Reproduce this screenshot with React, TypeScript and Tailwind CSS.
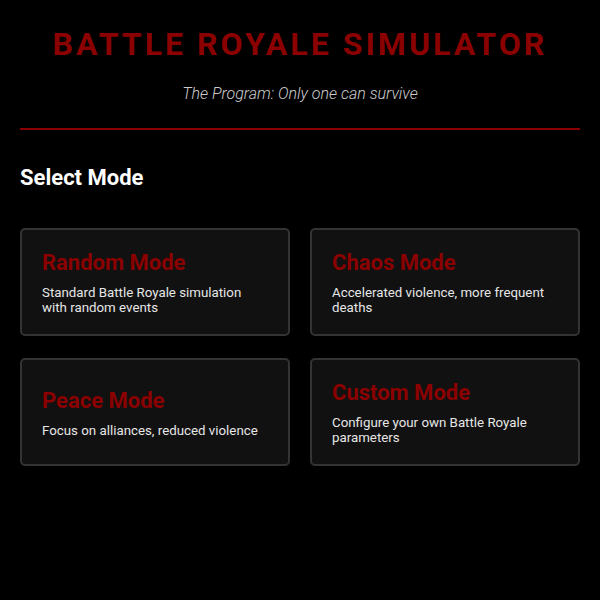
import React from "react";

type Mode = {
  id: string;
  name: string;
  description: string;
};

const modes: Mode[] = [
  { id: "random", name: "Random Mode", description: "Standard Battle Royale simulation with random events" },
  { id: "chaos", name: "Chaos Mode", description: "Accelerated violence, more frequent deaths" },
  { id: "peace", name: "Peace Mode", description: "Focus on alliances, reduced violence" },
  { id: "custom", name: "Custom Mode", description: "Configure your own Battle Royale parameters" },
];

const App: React.FC = () => {
  return (
    <div className="min-h-screen bg-black text-[#e0e0e0] font-['Roboto',sans-serif]">
      <div className="px-5 pt-[26px]">
        <header className="text-center pb-[22px] border-b-2 border-[#8b0000]">
          <h1 className="text-[32px] leading-[36px] font-bold tracking-[0.095em] text-[#8b0000]">
            BATTLE ROYALE SIMULATOR
          </h1>
          <p className="mt-5 text-base italic font-light text-[#cccccc]">
            The Program: Only one can survive
          </p>
        </header>

        <h2 className="mt-[34px] text-[22px] leading-7 font-bold text-white">Select Mode</h2>

        <div className="grid grid-cols-2 gap-x-5 gap-y-[22px] mt-9">
          {modes.map((mode) => (
            <div
              key={mode.id}
              className="h-[108px] flex flex-col justify-center bg-[#111111] border-2 border-[#333333] rounded-[5px] px-5"
            >
              <h3 className="text-[22px] leading-7 font-bold text-[#8b0000]">{mode.name}</h3>
              <p className="mt-2 text-[13.3px] leading-[15px] text-[#e6e6e6]">{mode.description}</p>
            </div>
          ))}
        </div>
      </div>
    </div>
  );
};

export default App;
